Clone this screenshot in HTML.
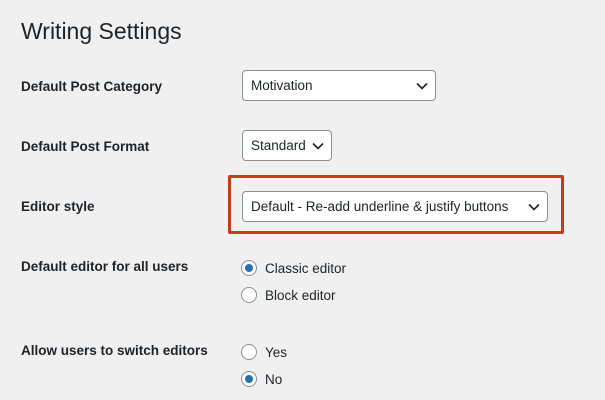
<!DOCTYPE html>
<html><head><style>
body{margin:0;width:605px;height:400px;background:#f0f0f1;font-family:"Liberation Sans",sans-serif;color:#1d2327;position:relative;overflow:hidden}
.a{position:absolute;white-space:nowrap}
h1{position:absolute;left:21px;top:18px;margin:0;font-size:23px;font-weight:400;color:#1d2327}
.lb{font-size:13.5px;font-weight:700}
.sel{position:absolute;background:#fff;border:1px solid #8c8f94;border-radius:4px;box-sizing:border-box;font-size:13.5px;padding-left:8px;line-height:30px;height:31px}
.sel svg{position:absolute;right:7px;top:11px}
.r{position:absolute;width:16px;height:16px;border:1px solid #8c8f94;border-radius:50%;background:#fff;box-sizing:border-box}
.r.on::after{content:"";position:absolute;left:3px;top:3px;width:8px;height:8px;border-radius:50%;background:#2271b1}
.t{font-size:13.5px}
</style></head><body>
<h1>Writing Settings</h1>
<div class="a lb" style="left:21px;top:79px">Default Post Category</div>
<div class="sel" style="left:242px;top:70px;width:194px">Motivation<svg width="12" height="8"><path d="M1 1.5l5 5 5-5" fill="none" stroke="#1d2327" stroke-width="1.6"/></svg></div>
<div class="a lb" style="left:21px;top:139px">Default Post Format</div>
<div class="sel" style="left:242px;top:130px;width:90px">Standard<svg width="12" height="8"><path d="M1 1.5l5 5 5-5" fill="none" stroke="#1d2327" stroke-width="1.6"/></svg></div>
<div class="a lb" style="left:21px;top:199px">Editor style</div>
<div class="a" style="left:228px;top:175px;width:330px;height:53px;border:3px solid #c9391c;border-radius:2px"></div>
<div class="sel" style="left:242px;top:191px;width:306px">Default - Re-add underline &amp; justify buttons<svg width="12" height="8"><path d="M1 1.5l5 5 5-5" fill="none" stroke="#1d2327" stroke-width="1.6"/></svg></div>
<div class="a lb" style="left:21px;top:259px">Default editor for all users</div>
<div class="r on" style="left:241px;top:260px"></div><div class="a t" style="left:265px;top:261px">Classic editor</div>
<div class="r" style="left:241px;top:287px"></div><div class="a t" style="left:265px;top:288px">Block editor</div>
<div class="a lb" style="left:21px;top:343px">Allow users to switch editors</div>
<div class="r" style="left:241px;top:344px"></div><div class="a t" style="left:265px;top:345px">Yes</div>
<div class="r on" style="left:241px;top:371px"></div><div class="a t" style="left:265px;top:372px">No</div>
</body></html>
